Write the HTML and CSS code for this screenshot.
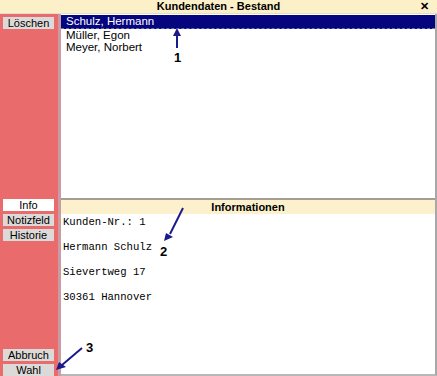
FILE: index.html
```html
<!DOCTYPE html>
<html>
<head>
	<meta charset="utf-8">
	<title>Kundendaten - Bestand</title>
	<link rel="stylesheet" href="styles.css">
</head>
<body>
	<div class="window">
		<div class="titlebar">
			<span class="title">Kundendaten - Bestand</span>
			<span class="close">&#x2715;</span>
		</div>
		<div class="main">
			<div class="sidebar">
				<div class="btn">Löschen</div>
				<div class="group-info">
					<div class="btn active">Info</div>
					<div class="btn">Notizfeld</div>
					<div class="btn">Historie</div>
				</div>
				<div class="group-end">
					<div class="btn">Abbruch</div>
					<div class="btn last">Wahl</div>
				</div>
			</div>
			<div class="content">
				<div class="list">
					<div class="row selected">Schulz, Hermann</div>
					<div class="row">Müller, Egon</div>
					<div class="row">Meyer, Norbert</div>
				</div>
				<div class="info">
					<div class="info-head">Informationen</div>
					<div class="info-body">
						<div class="line">Kunden-Nr.: 1</div>
						<div class="line">Hermann Schulz</div>
						<div class="line">Sievertweg 17</div>
						<div class="line">30361 Hannover</div>
					</div>
				</div>
			</div>
		</div>

		<svg class="marks" width="437" height="376" viewBox="0 0 437 376">
			<g stroke="#1a1a8c" stroke-width="2" fill="#1a1a8c">
				<line x1="177" y1="48" x2="177" y2="33"/>
				<polygon points="173,36 181,36 177,28" stroke="none"/>
				<line x1="183" y1="208" x2="170" y2="234"/>
				<polygon points="164,241 166,233 173,237" stroke="none"/>
				<line x1="82" y1="348" x2="62" y2="365"/>
				<polygon points="56,370 59,362 66,367" stroke="none"/>
			</g>
			<text x="174" y="62" class="num">1</text>
			<text x="160" y="256" class="num">2</text>
			<text x="86" y="352" class="num">3</text>
		</svg>
	</div>
</body>
</html>
```

FILE: styles.css
```css
body {
	margin: 0;
	background: #fff;
	font-family: "Liberation Sans", Arial, sans-serif;
	font-size: 11px;
	color: #000;
}

.window {
	position: relative;
	width: 437px;
	height: 376px;
	display: flex;
	flex-direction: column;
	overflow: hidden;
}

.titlebar {
	height: 13px;
	background: #fcf0c9;
	border-bottom: 1px solid #e4dccc;
	display: flex;
	align-items: center;
	justify-content: center;
	position: relative;
}

.title {
	font-weight: bold;
	font-size: 11px;
	line-height: 13px;
}

.close {
	position: absolute;
	right: 8px;
	top: 0;
	font-size: 11px;
	font-weight: bold;
	line-height: 13px;
}

.main {
	flex: 1;
	display: flex;
}

.sidebar {
	width: 55px;
	background: #e96b6b;
	border-right: 3px solid #c89ca2;
	padding: 3px 0 0 3px;
	display: flex;
	flex-direction: column;
	box-sizing: content-box;
}

.btn {
	width: 51px;
	height: 12px;
	line-height: 12px;
	background: #dcdad8;
	text-align: center;
	font-size: 11px;
	margin-bottom: 3px;
}

.btn.active {
	background: #fff;
}

.btn.last {
	margin-bottom: 0;
	margin-top: 1px;
}

.group-info {
	margin-top: 167px;
}

.group-end {
	margin-top: auto;
}

.content {
	flex: 1;
	display: flex;
	flex-direction: column;
	border-right: 2px solid #a8a8a8;
	border-bottom: 2px solid #b8b8b8;
}

.list {
	height: 183px;
	padding-top: 1px;
	border-bottom: 2px solid #a49e92;
}

.row {
	height: 12px;
	line-height: 12px;
	padding-left: 5px;
	font-size: 11.5px;
	overflow: hidden;
}

.row.selected {
	height: 13px;
	line-height: 13px;
	background: #05057e;
	color: #fff;
	border-bottom: 1px dashed #6a6ac0;
}

.info {
	flex: 1;
	display: flex;
	flex-direction: column;
}

.info-head {
	height: 14px;
	line-height: 14px;
	background: #fdf0cd;
	text-align: center;
	font-weight: bold;
}

.info-body {
	padding: 2px 0 0 2px;
	font-family: "Liberation Mono", "Courier New", monospace;
	font-size: 10.6px;
}

.line {
	height: 25px;
	line-height: 13px;
}

.marks {
	position: absolute;
	left: 0;
	top: 0;
	pointer-events: none;
}

.num {
	font-family: "Liberation Sans", Arial, sans-serif;
	font-weight: bold;
	font-size: 13px;
	fill: #000;
}
```
